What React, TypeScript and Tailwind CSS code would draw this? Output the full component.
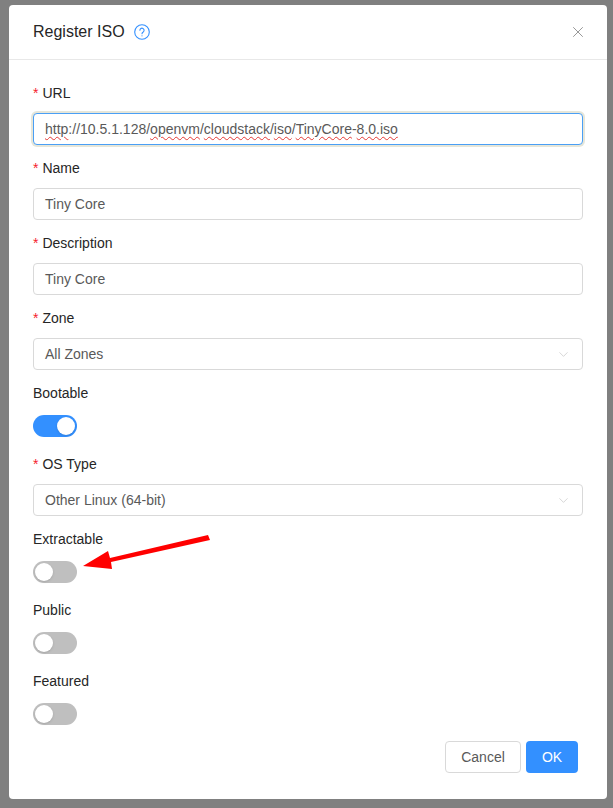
import { ChevronDown, X } from "lucide-react"

const label = "text-[14px] leading-[22px] text-[#262626] mb-[9px]"
const control = "h-8 w-full rounded border border-[#d9d9d9] bg-white px-[11px] flex items-center text-[14px] text-[#595959]"

function Label({ text, required }: { text: string; required?: boolean }) {
  return (
    <div className={label}>
      {required && <span className="text-[#f5222d] mr-1">*</span>}
      {text}
    </div>
  )
}

function Switch({ on }: { on?: boolean }) {
  return (
    <div className="h-7 pt-0.5">
      <div className={on ? "h-[22px] w-11 rounded-full bg-[#3390ff] relative" : "h-[22px] w-11 rounded-full bg-[#bfbfbf] relative"}>
        <div className={on ? "absolute top-[2px] left-[24px] size-[18px] rounded-full bg-white shadow" : "absolute top-[2px] left-[2px] size-[18px] rounded-full bg-white shadow"} />
      </div>
    </div>
  )
}

function Typo({ children }: { children: string }) {
  return <span className="underline decoration-wavy decoration-[#e53935] decoration-1 underline-offset-2">{children}</span>
}

export default function App() {
  return (
    <div className="h-[808px] w-[613px] overflow-hidden bg-[#808080] pt-[5px] pl-[9px] font-['Liberation_Sans',Arial,sans-serif] relative">
      <div className="w-[598px] h-[794px] bg-white rounded">
        <div className="h-[55px] border-b border-[#e8e8e8] px-6 flex items-center justify-between">
          <div className="flex items-center gap-[9px] text-[16px] text-[#262626]">
            Register ISO
            <svg width="16" height="16" viewBox="0 0 16 16" fill="none" stroke="#3390ff" strokeWidth="1.1">
              <circle cx="8" cy="8" r="7.3" />
              <path d="M5.9 6.3a2.1 2.1 0 1 1 3.3 1.7c-.8.5-1.2.9-1.2 1.8" strokeLinecap="round" />
              <circle cx="8" cy="11.8" r=".6" fill="#3390ff" stroke="none" />
            </svg>
          </div>
          <X size={18} strokeWidth={1.2} className="text-[#8c8c8c] mr-[-4px]" />
        </div>

        <div className="px-6 pt-[22px]">
          <div className="mb-3">
            <Label text="URL" required />
            <div className={control + " !border-[#4a9ff5] shadow-[0_0_0_2px_rgba(200,200,170,0.45)]"}>
              <span className="whitespace-pre">
                <Typo>http</Typo>://10.5.1.128/<Typo>openvm</Typo>/<Typo>cloudstack</Typo>/<Typo>iso</Typo>/<Typo>TinyCore</Typo>-<Typo>8.0.iso</Typo>
              </span>
            </div>
          </div>
          <div className="mb-3">
            <Label text="Name" required />
            <div className={control}>Tiny Core</div>
          </div>
          <div className="mb-3">
            <Label text="Description" required />
            <div className={control}>Tiny Core</div>
          </div>
          <div className="mb-3">
            <Label text="Zone" required />
            <div className={control + " justify-between"}>
              All Zones
              <ChevronDown size={15} strokeWidth={1} className="text-[#bfbfbf]" />
            </div>
          </div>
          <div className="mb-3">
            <Label text="Bootable" />
            <Switch on />
          </div>
          <div className="mb-3">
            <Label text="OS Type" required />
            <div className={control + " justify-between"}>
              Other Linux (64-bit)
              <ChevronDown size={15} strokeWidth={1} className="text-[#bfbfbf]" />
            </div>
          </div>
          <div className="mb-3">
            <Label text="Extractable" />
            <Switch />
          </div>
          <div className="mb-3">
            <Label text="Public" />
            <Switch />
          </div>
          <div className="mb-3">
            <Label text="Featured" />
            <Switch />
          </div>
          <div className="flex justify-end gap-[5px] pr-[5px] mt-0.5">
            <button className="h-8 w-[76px] rounded border border-[#d9d9d9] bg-white text-[14px] text-[#595959]">Cancel</button>
            <button className="h-8 w-[52px] rounded bg-[#3390ff] text-[14px] text-white">OK</button>
          </div>
        </div>
      </div>

      <svg className="absolute left-0 top-0 pointer-events-none" width="613" height="808" viewBox="0 0 613 808">
        <polygon points="83,566 108,551 110,558 208,535 210,540 111,562 112,569" fill="#ff0000" />
      </svg>
    </div>
  )
}
